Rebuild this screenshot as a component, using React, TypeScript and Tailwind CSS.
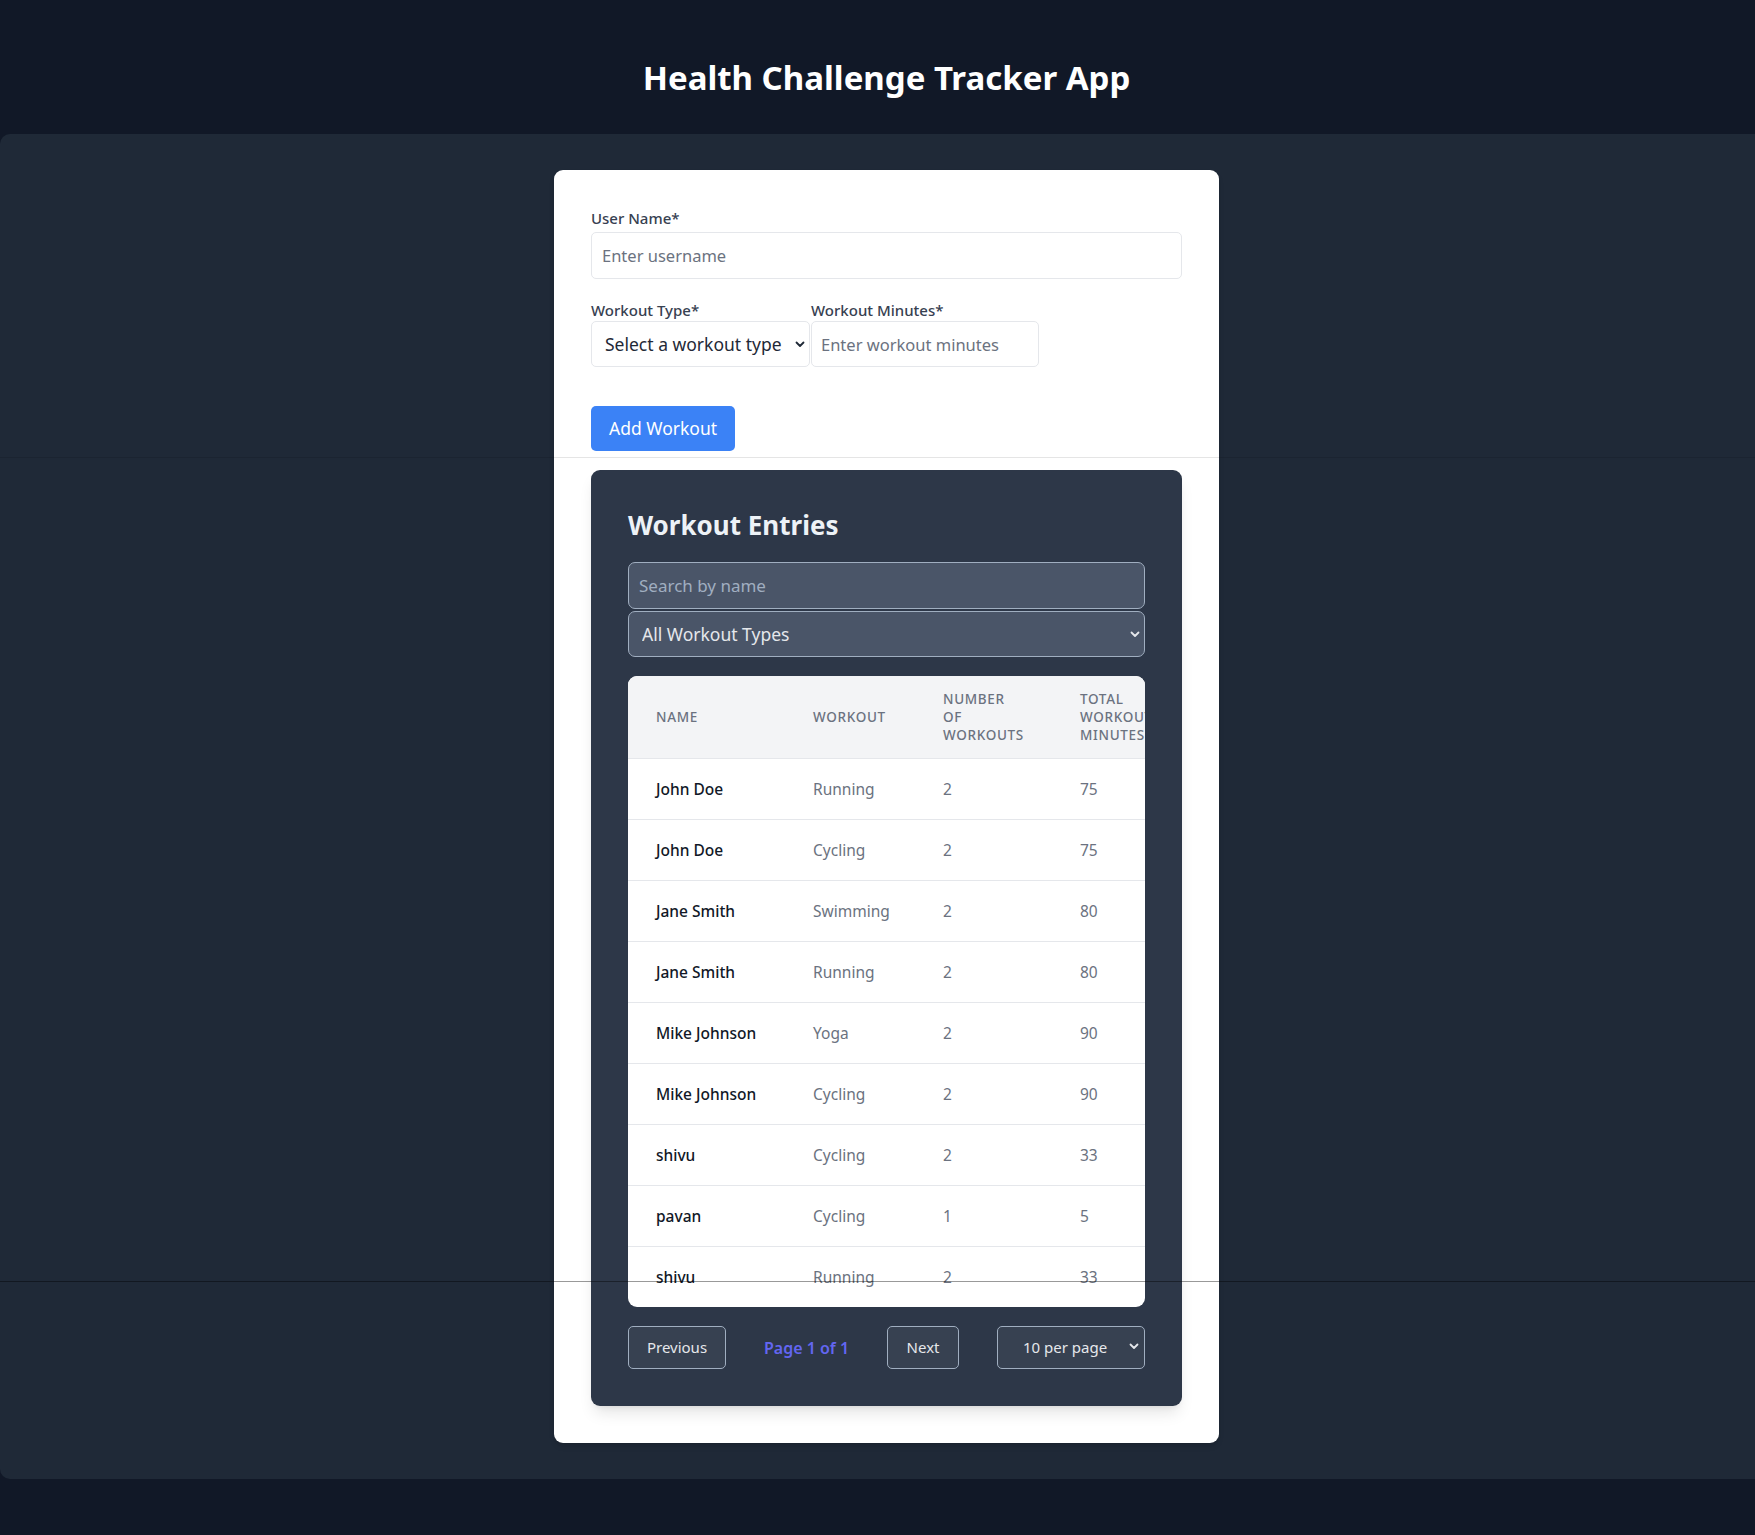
import React from "react";

const entries = [
  { name: "John Doe", workout: "Running", count: 2, minutes: 75 },
  { name: "John Doe", workout: "Cycling", count: 2, minutes: 75 },
  { name: "Jane Smith", workout: "Swimming", count: 2, minutes: 80 },
  { name: "Jane Smith", workout: "Running", count: 2, minutes: 80 },
  { name: "Mike Johnson", workout: "Yoga", count: 2, minutes: 90 },
  { name: "Mike Johnson", workout: "Cycling", count: 2, minutes: 90 },
  { name: "shivu", workout: "Cycling", count: 2, minutes: 33 },
  { name: "pavan", workout: "Cycling", count: 1, minutes: 5 },
  { name: "shivu", workout: "Running", count: 2, minutes: 33 },
];

function Chevron({ className }: { className?: string }) {
  return (
    <svg className={className} width="10" height="7" viewBox="0 0 10 7" fill="none">
      <path
        d="M1.5 1.5l3.5 3.5 3.5-3.5"
        stroke="currentColor"
        strokeWidth="1.8"
        strokeLinecap="round"
        strokeLinejoin="round"
      />
    </svg>
  );
}

function WorkoutForm() {
  return (
    <form onSubmit={(e) => e.preventDefault()}>
      <label className="block text-[15px] font-medium leading-[23px] text-[#374151]">User Name*</label>
      <input
        placeholder="Enter username"
        className="mt-[2px] block h-[47px] w-full rounded-[5px] border border-[#e5e7eb] px-[10px] text-[16.5px] text-[#1f2937] placeholder:text-[#6b7280]"
      />
      <div className="mt-[20px] flex">
        <div>
          <label className="block text-[15px] font-medium leading-[22px] text-[#374151]">Workout Type*</label>
          <div className="relative w-[219px]">
            <select className="block h-[46px] w-full appearance-none rounded-[5px] border border-[#e5e7eb] bg-white pl-[13px] text-[17.5px] text-[#1f2937]">
              <option>Select a workout type</option>
              <option>Running</option>
              <option>Cycling</option>
              <option>Swimming</option>
              <option>Yoga</option>
            </select>
            <Chevron className="pointer-events-none absolute right-[5px] top-[20px] text-[#1f2937]" />
          </div>
        </div>
        <div className="ml-px">
          <label className="block text-[15px] font-medium leading-[22px] text-[#374151]">Workout Minutes*</label>
          <input
            placeholder="Enter workout minutes"
            className="block h-[46px] w-[228px] rounded-[5px] border border-[#e5e7eb] px-[9px] text-[16.5px] text-[#1f2937] placeholder:text-[#6b7280]"
          />
        </div>
      </div>
      <button className="mt-[39px] block h-[45px] rounded-[5px] bg-[#3b82f6] px-[18px] text-[17.5px] text-white">
        Add Workout
      </button>
    </form>
  );
}

function EntriesPanel() {
  return (
    <section className="mt-[19px] rounded-[9px] bg-[#2d3748] p-[37px] shadow-lg">
      <h2 className="text-[26px] font-bold leading-[37px] text-[#edf2f7]">Workout Entries</h2>
      <input
        placeholder="Search by name"
        className="mt-[18px] block h-[47px] w-full rounded-[7px] border border-[#a0aec0] bg-[#4a5568] px-[10px] text-[17px] text-white placeholder:text-[#a0aec0]"
      />
      <div className="relative mt-[2px]">
        <select className="block h-[46px] w-full appearance-none rounded-[7px] border border-[#a0aec0] bg-[#4a5568] pl-[13px] text-[17.5px] text-[#e5e7eb]">
          <option>All Workout Types</option>
          <option>Running</option>
          <option>Cycling</option>
          <option>Swimming</option>
          <option>Yoga</option>
        </select>
        <Chevron className="pointer-events-none absolute right-[5px] top-[20px] text-[#e5e7eb]" />
      </div>

      <div className="mt-[19px] h-[631px] overflow-hidden rounded-[9px] bg-white">
        <table className="w-[564px] table-fixed">
          <colgroup>
            <col className="w-[157px]" />
            <col className="w-[130px]" />
            <col className="w-[137px]" />
            <col className="w-[140px]" />
          </colgroup>
          <thead className="bg-[#f3f4f6]">
            <tr className="border-b border-[#e5e7eb]">
              {["Name", "Workout", "Number of Workouts", "Total Workout Minutes"].map((h) => (
                <th
                  key={h}
                  className="px-[28px] py-[14px] text-left text-[13.5px] font-medium uppercase leading-[18px] tracking-wider text-[#6b7280]"
                >
                  {h}
                </th>
              ))}
            </tr>
          </thead>
          <tbody>
            {entries.map((row, i) => (
              <tr key={i} className="border-b border-[#e5e7eb]">
                <td className="whitespace-nowrap px-[28px] py-[18px] text-[15.5px] font-medium leading-[24px] text-[#111827]">
                  {row.name}
                </td>
                <td className="whitespace-nowrap px-[28px] py-[18px] text-[15.5px] leading-[24px] text-[#6b7280]">
                  {row.workout}
                </td>
                <td className="whitespace-nowrap px-[28px] py-[18px] text-[15.5px] leading-[24px] text-[#6b7280]">
                  {row.count}
                </td>
                <td className="whitespace-nowrap px-[28px] py-[18px] text-[15.5px] leading-[24px] text-[#6b7280]">
                  {row.minutes}
                </td>
              </tr>
            ))}
          </tbody>
        </table>
      </div>

      <div className="mt-[19px] flex items-center justify-between">
        <button className="h-[43px] w-[98px] rounded-[5px] border border-[#a0aec0] bg-[#374151] text-[15px] text-[#e5e7eb]">
          Previous
        </button>
        <span className="text-[16px] font-semibold text-[#6366f1]">Page 1 of 1</span>
        <button className="h-[43px] w-[72px] rounded-[5px] border border-[#a0aec0] bg-[#374151] text-[15px] text-[#e5e7eb]">
          Next
        </button>
        <div className="relative w-[148px]">
          <select className="block h-[43px] w-full appearance-none rounded-[5px] border border-[#a0aec0] bg-[#374151] pl-[25px] text-[15px] text-[#e5e7eb]">
            <option>10 per page</option>
            <option>20 per page</option>
            <option>50 per page</option>
          </select>
          <Chevron className="pointer-events-none absolute right-[6px] top-[17px] text-[#e5e7eb]" />
        </div>
      </div>
    </section>
  );
}

export default function App() {
  return (
    <div className="relative min-h-screen bg-[#111827] font-['Noto_Sans',sans-serif]">
      <header className="h-[134px] pl-[18px] pt-[58px] text-center">
        <h1 className="text-[33px] font-bold leading-[40px] text-white">Health Challenge Tracker App</h1>
      </header>
      <main className="rounded-l-[10px] bg-[#1f2937] py-[36px] pl-[18px]">
        <div className="mx-auto w-[665px] rounded-[9px] bg-white p-[37px] shadow-md">
          <WorkoutForm />
          <EntriesPanel />
        </div>
      </main>
      {/* faint seams across the page */}
      <div className="pointer-events-none absolute left-0 right-0 top-[457px] h-px bg-black/10" />
      <div className="pointer-events-none absolute left-0 right-0 top-[1281px] h-px bg-black/40" />
    </div>
  );
}
